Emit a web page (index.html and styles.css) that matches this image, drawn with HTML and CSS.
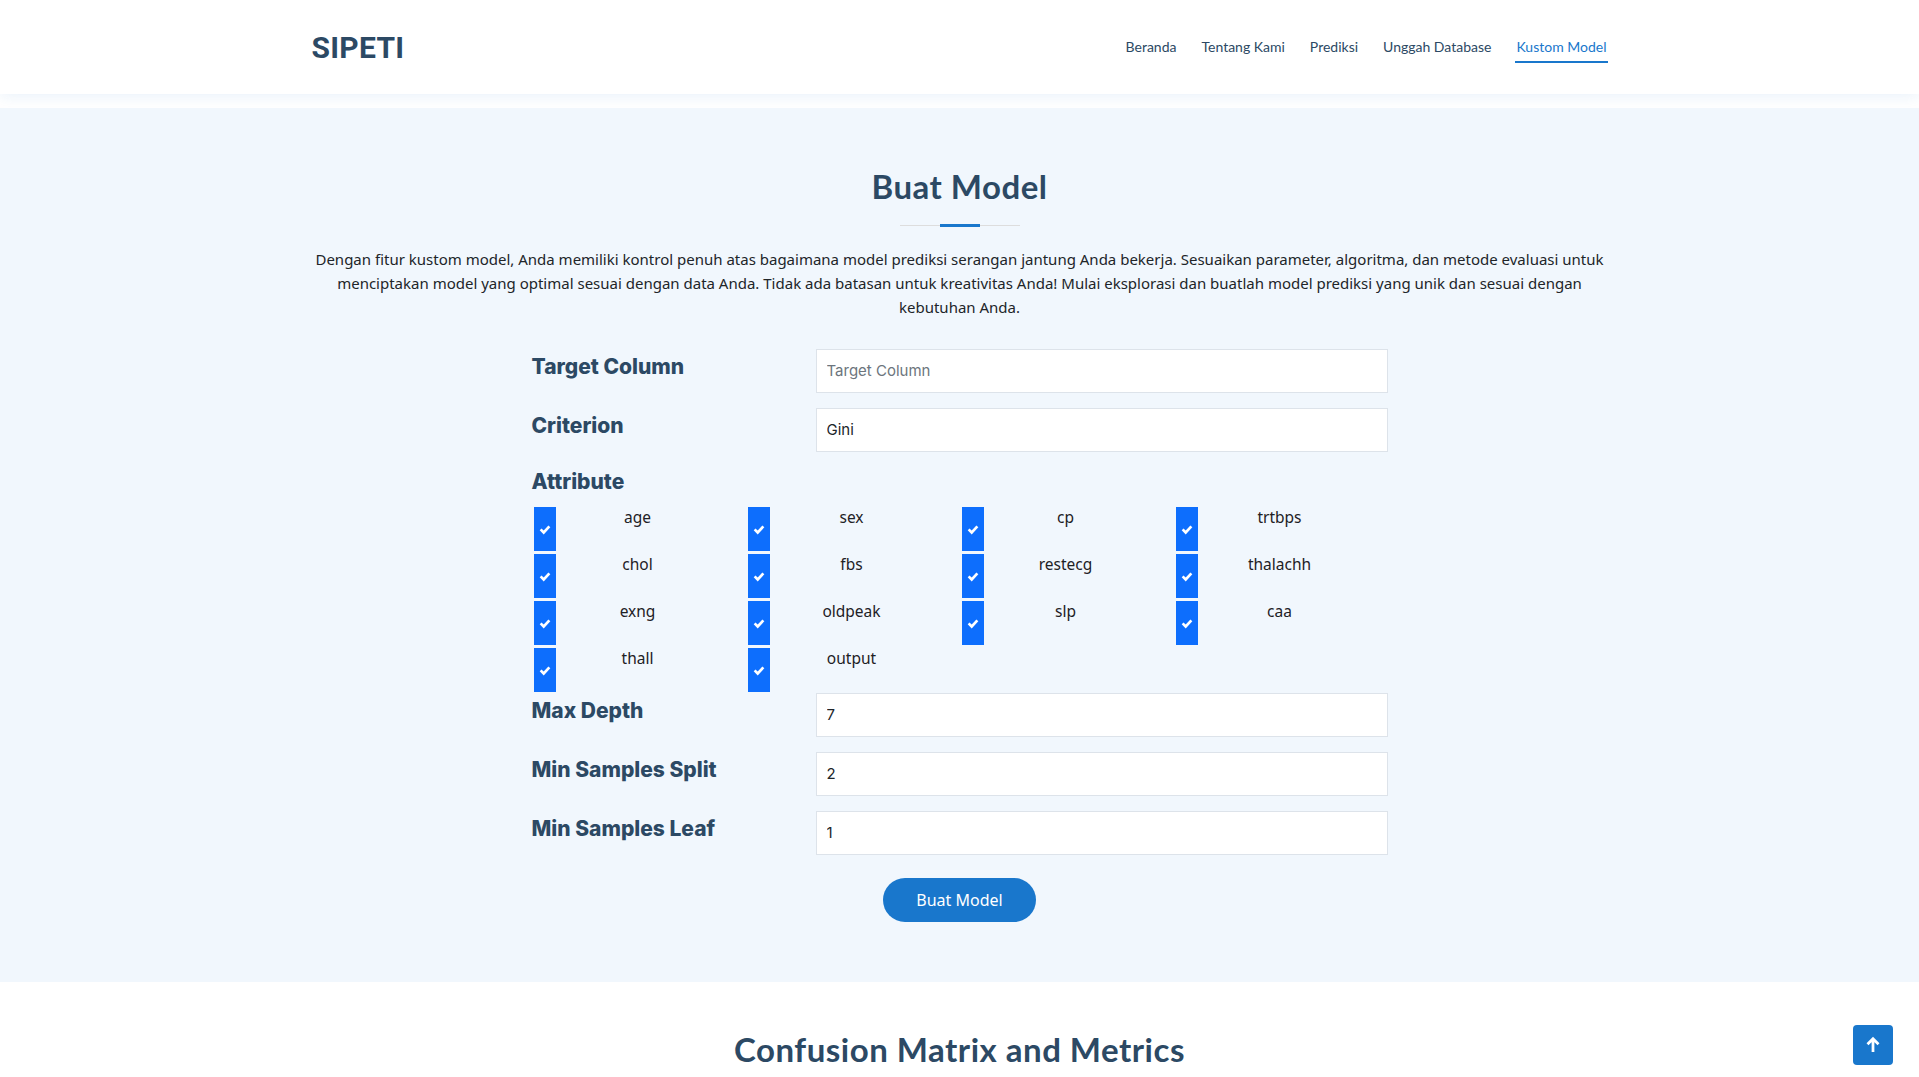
FILE: index.html
```html
<!DOCTYPE html>
<html>

<head>
    <title>SIPETI - Kustom Model</title>
    <meta charset="utf-8">
    <link rel="stylesheet" href="styles.css">
</head>

<body>
    <header class="header">
        <div class="container header-inner">
            <a class="logo" href="#">SIPETI</a>
            <nav class="navbar">
                <a class="nav-link" href="#">Beranda</a>
                <a class="nav-link" href="#">Tentang Kami</a>
                <a class="nav-link" href="#">Prediksi</a>
                <a class="nav-link" href="#">Unggah Database</a>
                <a class="nav-link active" href="#">Kustom Model</a>
            </nav>
        </div>
    </header>

    <main>
        <!-- Form kustom model -->
        <section class="section section-bg model-section">
            <div class="container">
                <div class="section-title">
                    <h2>Buat Model</h2>
                    <p>Dengan fitur kustom model, Anda memiliki kontrol penuh atas bagaimana model prediksi serangan jantung Anda bekerja. Sesuaikan parameter, algoritma, dan metode evaluasi untuk menciptakan model yang optimal sesuai dengan data Anda. Tidak ada batasan untuk kreativitas Anda! Mulai eksplorasi dan buatlah model prediksi yang unik dan sesuai dengan kebutuhan Anda.</p>
                </div>

                <form class="model-form">
                    <div class="form-row">
                        <label class="form-label">Target Column</label>
                        <input class="form-input" type="text" placeholder="Target Column">
                    </div>
                    <div class="form-row">
                        <label class="form-label">Criterion</label>
                        <input class="form-input" type="text" value="Gini">
                    </div>

                    <div class="attribute-title">Attribute</div>
                    <div class="attribute-grid">
                        <label class="check-item"><span class="check-box"><svg viewBox="0 0 16 16"><path d="M3 8.5 6.5 12 13 5"/></svg></span><span class="check-label">age</span></label>
                        <label class="check-item"><span class="check-box"><svg viewBox="0 0 16 16"><path d="M3 8.5 6.5 12 13 5"/></svg></span><span class="check-label">sex</span></label>
                        <label class="check-item"><span class="check-box"><svg viewBox="0 0 16 16"><path d="M3 8.5 6.5 12 13 5"/></svg></span><span class="check-label">cp</span></label>
                        <label class="check-item"><span class="check-box"><svg viewBox="0 0 16 16"><path d="M3 8.5 6.5 12 13 5"/></svg></span><span class="check-label">trtbps</span></label>
                        <label class="check-item"><span class="check-box"><svg viewBox="0 0 16 16"><path d="M3 8.5 6.5 12 13 5"/></svg></span><span class="check-label">chol</span></label>
                        <label class="check-item"><span class="check-box"><svg viewBox="0 0 16 16"><path d="M3 8.5 6.5 12 13 5"/></svg></span><span class="check-label">fbs</span></label>
                        <label class="check-item"><span class="check-box"><svg viewBox="0 0 16 16"><path d="M3 8.5 6.5 12 13 5"/></svg></span><span class="check-label">restecg</span></label>
                        <label class="check-item"><span class="check-box"><svg viewBox="0 0 16 16"><path d="M3 8.5 6.5 12 13 5"/></svg></span><span class="check-label">thalachh</span></label>
                        <label class="check-item"><span class="check-box"><svg viewBox="0 0 16 16"><path d="M3 8.5 6.5 12 13 5"/></svg></span><span class="check-label">exng</span></label>
                        <label class="check-item"><span class="check-box"><svg viewBox="0 0 16 16"><path d="M3 8.5 6.5 12 13 5"/></svg></span><span class="check-label">oldpeak</span></label>
                        <label class="check-item"><span class="check-box"><svg viewBox="0 0 16 16"><path d="M3 8.5 6.5 12 13 5"/></svg></span><span class="check-label">slp</span></label>
                        <label class="check-item"><span class="check-box"><svg viewBox="0 0 16 16"><path d="M3 8.5 6.5 12 13 5"/></svg></span><span class="check-label">caa</span></label>
                        <label class="check-item"><span class="check-box"><svg viewBox="0 0 16 16"><path d="M3 8.5 6.5 12 13 5"/></svg></span><span class="check-label">thall</span></label>
                        <label class="check-item"><span class="check-box"><svg viewBox="0 0 16 16"><path d="M3 8.5 6.5 12 13 5"/></svg></span><span class="check-label">output</span></label>
                    </div>

                    <div class="form-row">
                        <label class="form-label">Max Depth</label>
                        <input class="form-input" type="text" value="7">
                    </div>
                    <div class="form-row">
                        <label class="form-label">Min Samples Split</label>
                        <input class="form-input" type="text" value="2">
                    </div>
                    <div class="form-row">
                        <label class="form-label">Min Samples Leaf</label>
                        <input class="form-input" type="text" value="1">
                    </div>

                    <div class="form-submit">
                        <button class="btn-primary" type="button">Buat Model</button>
                    </div>
                </form>
            </div>
        </section>

        <!-- Hasil evaluasi -->
        <section class="section result-section">
            <div class="container">
                <div class="section-title">
                    <h2>Confusion Matrix and Metrics</h2>
                </div>
                <div class="result-body"></div>
            </div>
        </section>
    </main>

    <a href="#" class="back-to-top">
        <svg viewBox="0 0 16 16"><path d="M8 13V3.5M4 7.5 8 3.5l4 4"/></svg>
    </a>
</body>

</html>
```

FILE: styles.css
```css
body {
    margin: 0;
    font-family: 'Noto Sans', 'Open Sans', sans-serif;
    color: #212529;
    background: #fff;
}

a {
    text-decoration: none;
}

.container {
    max-width: 1296px;
    margin: 0 auto;
    padding: 0 12px;
}

/* Header */
.header {
    height: 94px;
    background: #fff;
    box-shadow: 0 2px 15px rgba(25, 119, 204, 0.1);
}

.header-inner {
    height: 94px;
    display: flex;
    align-items: center;
    justify-content: space-between;
}

.logo {
    font-family: Roboto, sans-serif;
    font-size: 30px;
    font-weight: 700;
    color: #2c4964;
    letter-spacing: 0.3px;
}

.navbar {
    display: flex;
    gap: 23px;
}

.nav-link {
    font-family: Lato, sans-serif;
    font-size: 14px;
    line-height: 20px;
    color: #2c4964;
    padding: 6px 1px 4px;
    border-bottom: 2px solid transparent;
}

.nav-link.active {
    color: #1977cc;
    border-bottom-color: #1977cc;
}

main {
    margin-top: 14px;
}

/* Sections */
.section-bg {
    background: #f1f7fd;
}

.model-section {
    padding: 59px 0 60px;
}

.section-title {
    text-align: center;
    padding-bottom: 30px;
}

.section-title h2 {
    font-family: Lato, sans-serif;
    font-size: 33px;
    line-height: 1.2;
    font-weight: 700;
    letter-spacing: 0.5px;
    color: #2c4964;
    margin: 0 0 20px;
    padding-bottom: 20px;
    position: relative;
}

.section-title h2::before {
    content: "";
    position: absolute;
    width: 120px;
    height: 1px;
    background: #ddd;
    bottom: 1px;
    left: calc(50% - 60px);
}

.section-title h2::after {
    content: "";
    position: absolute;
    width: 40px;
    height: 3px;
    background: #1977cc;
    bottom: 0;
    left: calc(50% - 20px);
}

.section-title p {
    margin: 0;
    font-size: 15px;
    line-height: 24px;
}

/* Form */
.model-form {
    width: 856px;
    margin: 0 auto;
}

.form-row {
    display: grid;
    grid-template-columns: 284px 1fr;
    margin-bottom: 15px;
}

.form-label,
.attribute-title {
    font-family: Inter, sans-serif;
    font-size: 21px;
    font-weight: 800;
    line-height: 30px;
    color: #2c4964;
}

.form-label {
    padding-top: 3px;
}

.attribute-title {
    margin-bottom: 10px;
}

.form-input {
    height: 44px;
    box-sizing: border-box;
    border: 1px solid #dde3ea;
    border-radius: 0;
    background: #fff;
    padding: 0 10px;
    font-family: Inter, sans-serif;
    font-size: 15px;
    color: #212529;
}

.form-input::placeholder {
    color: #6c757d;
}

.attribute-grid {
    display: grid;
    grid-template-columns: repeat(4, 214px);
    row-gap: 3px;
    margin-bottom: 1px;
}

.check-item {
    display: flex;
    align-items: flex-start;
    padding-left: 2px;
}

.check-box {
    width: 22px;
    height: 44px;
    background: #0d6efd;
    display: flex;
    align-items: center;
    justify-content: center;
}

.check-box svg {
    width: 14px;
    height: 14px;
    fill: none;
    stroke: #fff;
    stroke-width: 3;
}

.check-label {
    width: 164px;
    text-align: center;
    font-size: 15.5px;
    line-height: 20px;
    color: #1e2125;
}

.form-submit {
    text-align: center;
    padding-top: 8px;
}

.btn-primary {
    height: 44px;
    padding: 0 33px;
    border: none;
    border-radius: 50px;
    background: #1977cc;
    color: #fff;
    font-family: 'Noto Sans', sans-serif;
    font-size: 16px;
    cursor: pointer;
}

/* Result */
.result-section {
    padding: 48px 0 60px;
}

.result-body {
    min-height: 1200px;
}

.back-to-top {
    position: fixed;
    right: 26px;
    bottom: 12px;
    width: 40px;
    height: 40px;
    border-radius: 4px;
    background: #1977cc;
    display: flex;
    align-items: center;
    justify-content: center;
}

.back-to-top svg {
    width: 22px;
    height: 22px;
    fill: none;
    stroke: #fff;
    stroke-width: 2;
}
```
